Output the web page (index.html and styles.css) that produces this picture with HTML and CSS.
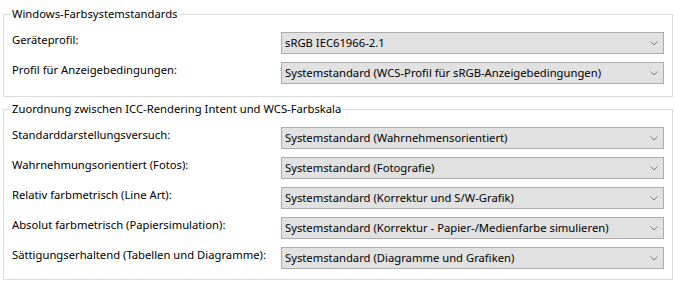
FILE: index.html
```html
<!DOCTYPE html>
<html lang="de">
<head>
    <meta charset="UTF-8">
    <title>Farbverwaltung - Erweitert</title>
    <link rel="stylesheet" href="styles.css">
</head>
<body>
    <fieldset class="group">
        <legend>Windows-Farbsystemstandards</legend>
        <div class="row">
            <label>Geräteprofil:</label>
            <div class="combo"><span>sRGB IEC61966-2.1</span><svg width="8" height="5" viewBox="0 0 8 5"><polyline points="0.5,0.5 4,4 7.5,0.5" /></svg></div>
        </div>
        <div class="row">
            <label>Profil für Anzeigebedingungen:</label>
            <div class="combo"><span>Systemstandard (WCS-Profil für sRGB-Anzeigebedingungen)</span><svg width="8" height="5" viewBox="0 0 8 5"><polyline points="0.5,0.5 4,4 7.5,0.5" /></svg></div>
        </div>
    </fieldset>

    <fieldset class="group">
        <legend>Zuordnung zwischen ICC-Rendering Intent und WCS-Farbskala</legend>
        <div class="row">
            <label>Standarddarstellungsversuch:</label>
            <div class="combo"><span>Systemstandard (Wahrnehmensorientiert)</span><svg width="8" height="5" viewBox="0 0 8 5"><polyline points="0.5,0.5 4,4 7.5,0.5" /></svg></div>
        </div>
        <div class="row">
            <label>Wahrnehmungsorientiert (Fotos):</label>
            <div class="combo"><span>Systemstandard (Fotografie)</span><svg width="8" height="5" viewBox="0 0 8 5"><polyline points="0.5,0.5 4,4 7.5,0.5" /></svg></div>
        </div>
        <div class="row">
            <label>Relativ farbmetrisch (Line Art):</label>
            <div class="combo"><span>Systemstandard (Korrektur und S/W-Grafik)</span><svg width="8" height="5" viewBox="0 0 8 5"><polyline points="0.5,0.5 4,4 7.5,0.5" /></svg></div>
        </div>
        <div class="row">
            <label>Absolut farbmetrisch (Papiersimulation):</label>
            <div class="combo"><span>Systemstandard (Korrektur - Papier-/Medienfarbe simulieren)</span><svg width="8" height="5" viewBox="0 0 8 5"><polyline points="0.5,0.5 4,4 7.5,0.5" /></svg></div>
        </div>
        <div class="row">
            <label>Sättigungserhaltend (Tabellen und Diagramme):</label>
            <div class="combo"><span>Systemstandard (Diagramme und Grafiken)</span><svg width="8" height="5" viewBox="0 0 8 5"><polyline points="0.5,0.5 4,4 7.5,0.5" /></svg></div>
        </div>
    </fieldset>
</body>
</html>
```

FILE: styles.css
```css
* {
    box-sizing: border-box;
}

body {
    margin: 0;
    background-color: #fff;
    color: #000;
    font-family: 'Noto Sans', sans-serif;
    font-size: 11.25px;
    line-height: 16px;
}

.group {
    margin: 6px 2px 0 3px;
    padding: 10px 8px 12px 8px;
    border: 1px solid #dcdcdc;
    display: flex;
    flex-direction: column;
    gap: 8px;
}

.group + .group {
    margin-top: 4px;
    padding-bottom: 10px;
}

.group legend {
    padding: 0 1px;
    margin-left: -1px;
}

.row {
    display: grid;
    grid-template-columns: 269px 1fr;
    height: 22px;
}

.row label {
    align-self: start;
    white-space: nowrap;
}

.combo {
    display: flex;
    align-items: center;
    justify-content: space-between;
    height: 22px;
    padding: 0 5px 0 3px;
    background-color: #e1e1e1;
    border: 1px solid #adadad;
}

.combo svg polyline {
    fill: none;
    stroke: #7a7a7a;
    stroke-width: 1;
}
```
